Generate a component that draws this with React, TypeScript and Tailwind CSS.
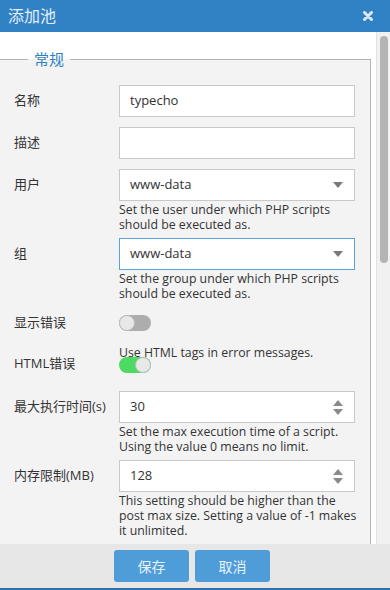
import React from 'react';

const labelFont = { fontFamily: '"Open Sans", "Noto Sans CJK SC", sans-serif' };

const Caret = () => (
  <svg width="10" height="6" viewBox="0 0 10 6" className="text-[#7a7a7a]">
    <path d="M0 0h10L5 6z" fill="currentColor" />
  </svg>
);

const Spinner = () => (
  <div className="flex flex-col items-center gap-[3px] text-[#8a8a8a]">
    <svg width="10" height="6" viewBox="0 0 10 6">
      <path d="M0 6h10L5 0z" fill="currentColor" />
    </svg>
    <svg width="10" height="6" viewBox="0 0 10 6">
      <path d="M0 0h10L5 6z" fill="currentColor" />
    </svg>
  </div>
);

const Toggle = ({ on }: { on: boolean }) => (
  <div
    className={
      on
        ? 'w-[32px] h-[16px] rounded-full bg-[#4cd964] flex justify-end items-center'
        : 'w-[32px] h-[16px] rounded-full bg-[#adadad] flex justify-start items-center'
    }
  >
    <div className="w-[16px] h-[16px] rounded-full bg-[#e8e8e8] border border-[#bdbdbd]" />
  </div>
);

const Help = ({ lines }: { lines: string[] }) => (
  <div className="text-[12.3px] leading-[15px] text-[#333] mt-px whitespace-nowrap">
    {lines.map((l) => (
      <div key={l}>{l}</div>
    ))}
  </div>
);

const Row = ({
  label,
  children,
  h = 32,
  className = '',
}: {
  label: string;
  children: React.ReactNode;
  h?: number;
  className?: string;
}) => (
  <div className={'flex ' + className}>
    <div
      className={
        (h === 32 ? 'h-[32px]' : 'h-[16px]') +
        ' w-[105px] shrink-0 flex items-center text-[13px] text-[#333]'
      }
    >
      {label}
    </div>
    <div className="w-[236px]">{children}</div>
  </div>
);

const Box = ({
  children,
  focused = false,
}: {
  children: React.ReactNode;
  focused?: boolean;
}) => (
  <div
    className={
      (focused ? 'border-[#5aa2dc]' : 'border-[#c9c9c9]') +
      ' h-[32px] border bg-white flex items-center justify-between pl-[10px] pr-[11px] text-[13px] text-[#333]'
    }
  >
    {children}
  </div>
);

export default function App() {
  return (
    <div className="w-[390px] h-[590px] flex flex-col bg-white overflow-hidden" style={labelFont}>
      <div className="h-[32px] shrink-0 bg-[#3182c5] flex items-center justify-between pl-[8px] pr-[17px]">
        <span className="text-[16px] text-[#e3eef8]">添加池</span>
        <svg width="10" height="10" viewBox="0 0 10 10">
          <path d="M1.5 1.5l7 7M8.5 1.5l-7 7" stroke="#dbe9f6" strokeWidth="3" strokeLinecap="round" />
        </svg>
      </div>

      <div className="flex-1 flex min-h-0">
        <div className="flex-1 overflow-hidden pt-[17px] pr-[5px]">
          <fieldset className="border-t border-r border-[#b3b3b3] bg-[#f3f3f3] pl-[14px] pt-[16px] pb-[20px]">
            <legend className="ml-[14px] px-[6px] text-[15px] leading-[20px] text-[#2f7fc2]">常规</legend>

            <Row label="名称" className="mb-[10px]">
              <Box>typecho</Box>
            </Row>
            <Row label="描述" className="mb-[10px]">
              <Box>{''}</Box>
            </Row>
            <Row label="用户" className="mb-[6px]">
              <Box>
                www-data
                <Caret />
              </Box>
              <Help lines={['Set the user under which PHP scripts', 'should be executed as.']} />
            </Row>
            <Row label="组" className="mb-[14px]">
              <Box focused>
                www-data
                <Caret />
              </Box>
              <Help lines={['Set the group under which PHP scripts', 'should be executed as.']} />
            </Row>
            <Row label="显示错误" h={16} className="mb-[14px]">
              <Toggle on={false} />
            </Row>
            <div className="flex mb-[18px]">
              <div className="w-[105px] shrink-0 pt-[12px] h-[28px] flex items-end text-[13px] text-[#333]">HTML错误</div>
              <div className="w-[236px]">
                <p className="text-[12.3px] leading-[15px] text-[#333] whitespace-nowrap">Use HTML tags in error messages.</p>
                <div className="-mt-[3px]">
                  <Toggle on />
                </div>
              </div>
            </div>
            <Row label="最大执行时间(s)" className="mb-[6px]">
              <Box>
                30
                <Spinner />
              </Box>
              <Help lines={['Set the max execution time of a script.', 'Using the value 0 means no limit.']} />
            </Row>
            <Row label="内存限制(MB)">
              <Box>
                128
                <Spinner />
              </Box>
              <Help
                lines={[
                  'This setting should be higher than the',
                  'post max size. Setting a value of -1 makes',
                  'it unlimited.',
                ]}
              />
            </Row>
          </fieldset>
        </div>
        <div className="w-[14px] shrink-0 bg-[#f1f1f1] border-l border-[#e2e2e2] pl-[3px] pt-[4px]">
          <div className="w-[8px] h-[227px] rounded-full bg-[#b4b4b4]" />
        </div>
      </div>

      <div className="h-[44px] shrink-0 bg-[#e7e7e7] flex items-center justify-center gap-[6px] pr-[6px]">
        <button className="w-[75px] h-[32px] rounded-[3px] bg-[#4e9dd8] text-[14px] text-[#e8f2fa]">保存</button>
        <button className="w-[75px] h-[32px] rounded-[3px] bg-[#4e9dd8] text-[14px] text-[#e8f2fa]">取消</button>
      </div>
      <div className="h-[2px] shrink-0 bg-[#2c70ac]" />
    </div>
  );
}
